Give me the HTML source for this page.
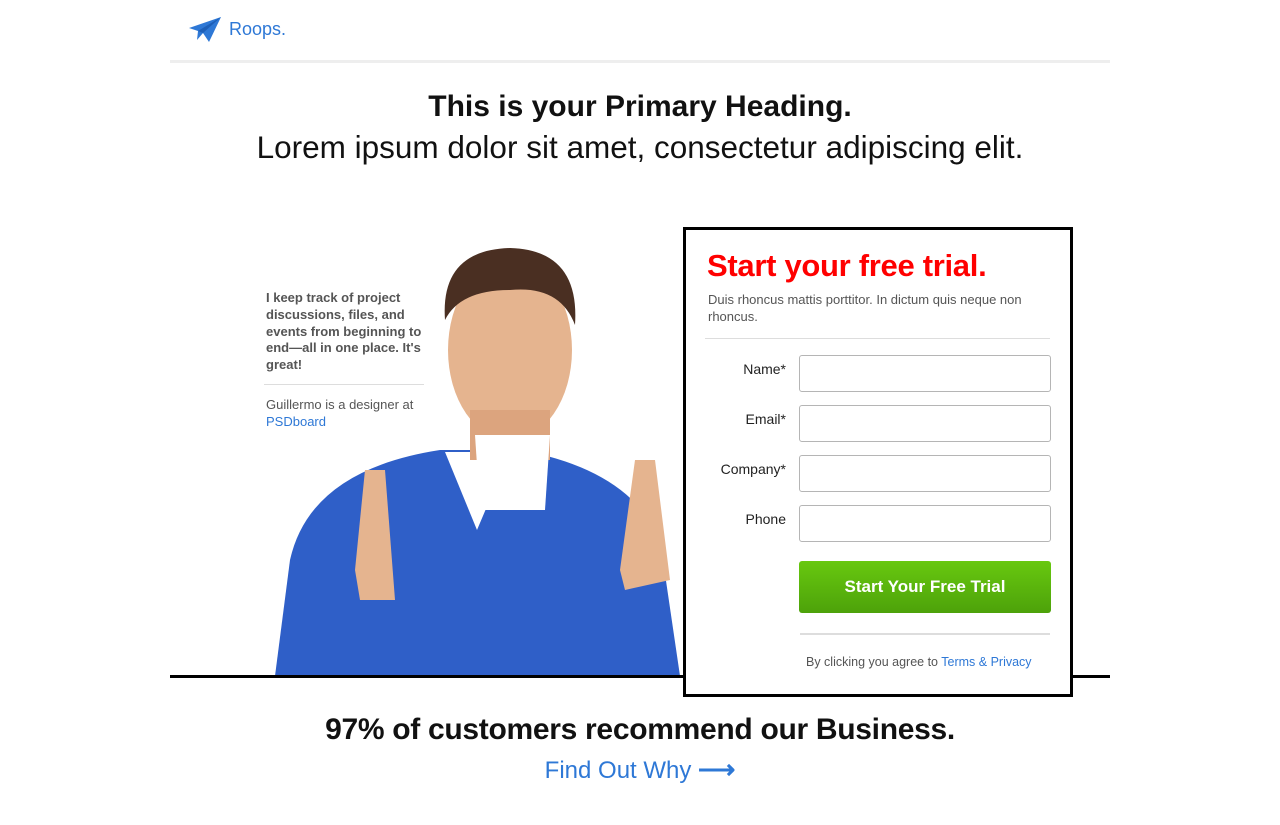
<!DOCTYPE html>
<html><head><meta charset="utf-8"><style>
body{margin:0;background:#fff;font-family:"Liberation Sans",sans-serif;width:1280px;height:825px;position:relative;overflow:hidden}
.a{position:absolute}
input{position:absolute;left:799px;width:252px;height:37px;border:1px solid #b5b5b5;border-radius:3px;box-sizing:border-box;background:#fff}
.lb{position:absolute;right:494px;font-size:14px;color:#222;text-align:right}
</style></head><body>
<svg class="a" style="left:188px;top:16px" width="34" height="28" viewBox="0 0 34 28"><path d="M1 12 L33 1 L21 26 L15 17 L9 24 L10 15 Z" fill="#2e78d6"/><path d="M10 15 L33 1 L15 17" fill="#1d5fb8"/></svg>
<div class="a" style="left:229px;top:19px;font-size:18px;color:#2e78d6">Roops.</div>
<div class="a" style="left:170px;top:60px;width:940px;height:3px;background:#eee"></div>
<div class="a" style="left:0;width:1280px;top:90px;text-align:center;font-size:30px;font-weight:bold;color:#111">This is your Primary Heading.</div>
<div class="a" style="left:0;width:1280px;top:129px;text-align:center;font-size:31.5px;color:#111">Lorem ipsum dolor sit amet, consectetur adipiscing elit.</div>
<div class="a" style="left:266px;top:290px;width:160px;font-size:13px;font-weight:bold;color:#555;line-height:16.8px">I keep track of project discussions, files, and events from beginning to end—all in one place. It's great!</div>
<div class="a" style="left:264px;top:384px;width:160px;height:1px;background:#ddd"></div>
<div class="a" style="left:266px;top:396px;font-size:13px;color:#555;line-height:17px">Guillermo is a designer at<br><span style="color:#2e78d6">PSDboard</span></div>
<svg class="a" style="left:270px;top:240px" width="420" height="436" viewBox="0 0 420 436">
<path d="M5 436 L20 320 Q40 230 170 210 L250 210 Q360 230 390 300 L410 436 Z" fill="#2f5fc8"/>
<path d="M175 212 L240 212 L207 290 Z" fill="#fff"/>
<ellipse cx="240" cy="110" rx="62" ry="90" fill="#e5b48f"/>
<path d="M175 80 Q170 10 240 8 Q310 10 305 85 Q290 45 240 50 Q190 50 175 80Z" fill="#4a2f22"/>
<rect x="200" y="170" width="80" height="50" fill="#dca47e"/>
<path d="M205 195 L210 270 L275 270 L280 195Z" fill="#fff"/>
<path d="M85 330 L95 230 L115 230 L125 360 L90 360Z" fill="#e5b48f"/>
<path d="M350 330 L365 220 L385 220 L400 340 L355 350Z" fill="#e5b48f"/>
</svg>
<div class="a" style="left:170px;top:675px;width:940px;height:3px;background:#000"></div>
<div class="a" style="left:683px;top:227px;width:384px;height:464px;border:3px solid #000;background:#fff"></div>
<div class="a" style="left:707px;top:248px;font-size:31px;font-weight:bold;color:#f00;letter-spacing:-0.3px">Start your free trial.</div>
<div class="a" style="left:708px;top:291px;width:350px;font-size:13px;color:#555;line-height:17px">Duis rhoncus mattis porttitor. In dictum quis neque non rhoncus.</div>
<div class="a" style="left:705px;top:338px;width:345px;height:1px;background:#ddd"></div>
<div class="lb" style="top:361px">Name*</div><input style="top:355px">
<div class="lb" style="top:411px">Email*</div><input style="top:405px">
<div class="lb" style="top:461px">Company*</div><input style="top:455px">
<div class="lb" style="top:511px">Phone</div><input style="top:505px">
<div class="a" style="left:799px;top:561px;width:252px;height:52px;border-radius:3px;background:linear-gradient(#68c80f,#4da20a);color:#fff;font-weight:bold;font-size:17px;text-align:center;line-height:52px">Start Your Free Trial</div>
<div class="a" style="left:800px;top:633px;width:250px;height:2px;background:#ddd"></div>
<div class="a" style="left:806px;top:655px;font-size:12.5px;color:#555">By clicking you agree to <span style="color:#2e78d6">Terms &amp; Privacy</span></div>
<div class="a" style="left:0;width:1280px;top:713px;text-align:center;font-size:30px;font-weight:bold;color:#111;letter-spacing:-0.3px">97% of customers recommend our Business.</div>
<div class="a" style="left:0;width:1280px;top:754px;text-align:center;font-size:24px;color:#2e78d6">Find Out Why <b style="font-size:26px">⟶</b></div>
</body></html>
